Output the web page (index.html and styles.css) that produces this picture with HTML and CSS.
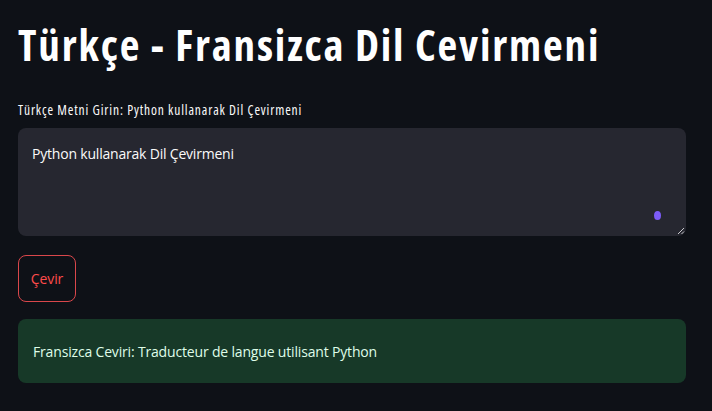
FILE: index.html
```html
<!DOCTYPE html>
<html lang="tr">
<head>
<meta charset="utf-8">
<link rel="stylesheet" href="styles.css">
</head>
<body>
<main class="app">
  <h1 class="title">Türkçe - Fransizca Dil Cevirmeni</h1>
  <p class="label">Türkçe Metni Girin: Python kullanarak Dil Çevirmeni</p>
  <div class="textarea">
    <span class="textarea-text">Python kullanarak Dil Çevirmeni</span>
    <span class="dot"></span>
    <svg class="grip" width="8" height="8" viewBox="0 0 8 8"><path d="M7 1L1 7M7 4.5L4.5 7" stroke="#c8c8cc" stroke-width="1" fill="none"/></svg>
  </div>
  <div class="btn-row"><button class="btn">Çevir</button></div>
  <div class="success">Fransizca Ceviri: Traducteur de langue utilisant Python</div>
</main>
</body>
</html>
```
FILE: styles.css
```css
html,body{margin:0;padding:0;}
body{background:#0e1117;color:#fafafa;font-family:"Open Sans","Noto Sans",sans-serif;}
.app{padding:0 26px 0 18px;display:flex;flex-direction:column;}
.title{margin:19px 0 0 0;font-size:43px;line-height:52px;font-weight:700;font-stretch:75%;letter-spacing:1.85px;color:#fff;}
.label{margin:30px 0 0 0;font-size:13.5px;line-height:18px;font-stretch:75%;letter-spacing:0.87px;color:#fafafa;}
.textarea{position:relative;margin-top:9px;height:108px;background:#262730;border-radius:8px;box-sizing:border-box;padding:14px 14px;}
.textarea-text{font-size:14px;line-height:22px;letter-spacing:-0.2px;color:#fafafa;}
.dot{position:absolute;left:636px;top:83px;width:7px;height:9px;border-radius:50%;background:#7c5cf7;}
.grip{position:absolute;right:1px;bottom:1px;}
.btn-row{margin-top:19px;display:flex;}
.btn{font-family:inherit;font-size:14px;letter-spacing:-0.1px;color:#ff4b4b;background:transparent;border:1px solid #d9474b;border-radius:8px;width:58px;height:47px;padding:0;}
.success{margin-top:17px;height:64px;box-sizing:border-box;background:#173928;border-radius:8px;padding:0 15px;display:flex;align-items:center;font-size:14px;letter-spacing:-0.17px;color:#dffde9;}
```
